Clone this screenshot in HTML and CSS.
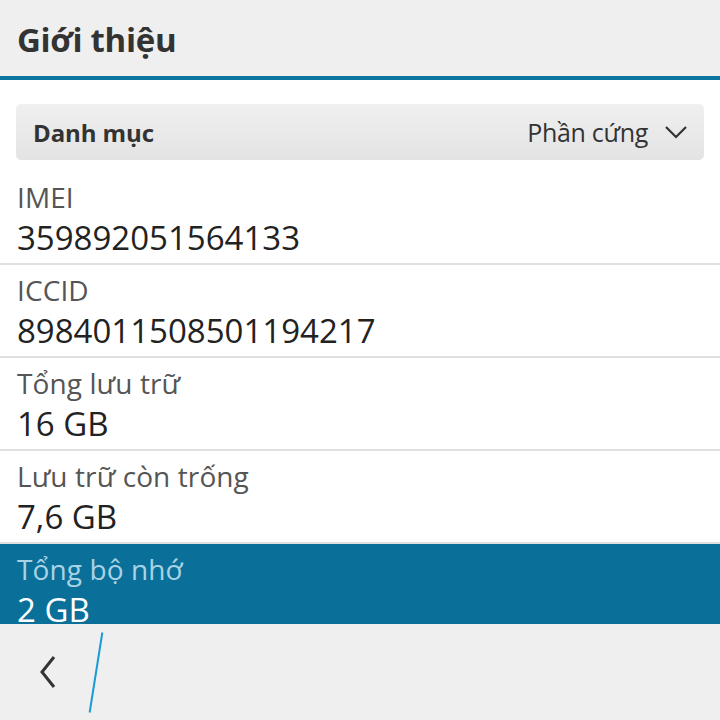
FILE: index.html
```html
<!DOCTYPE html>
<html lang="vi">
<head>
<meta charset="utf-8">
<link rel="stylesheet" href="styles.css">
</head>
<body>
<div class="screen">
  <header class="titlebar">
    <h1 class="title">Giới thiệu</h1>
  </header>
  <main class="content">
    <div class="dropdown">
      <span class="dd-label">Danh mục</span>
      <span class="dd-value">Phần cứng
        <svg class="chev" width="24" height="16" viewBox="0 0 24 16"><path d="M2 3 L12 13 L22 3" fill="none" stroke="#333" stroke-width="2.2"/></svg>
      </span>
    </div>
    <div class="list">
      <div class="item">
        <div class="label">IMEI</div>
        <div class="value">359892051564133</div>
      </div>
      <div class="item">
        <div class="label">ICCID</div>
        <div class="value">8984011508501194217</div>
      </div>
      <div class="item">
        <div class="label">Tổng lưu trữ</div>
        <div class="value">16 GB</div>
      </div>
      <div class="item">
        <div class="label">Lưu trữ còn trống</div>
        <div class="value">7,6 GB</div>
      </div>
      <div class="item selected">
        <div class="label">Tổng bộ nhớ</div>
        <div class="value">2 GB</div>
      </div>
    </div>
  </main>
  <footer class="actionbar">
    <svg class="back" width="20" height="36" viewBox="0 0 20 36"><path d="M16 3 L4 18 L16 33" fill="none" stroke="#333" stroke-width="3"/></svg>
    <span class="slash"></span>
  </footer>
</div>
</body>
</html>
```
FILE: styles.css
```css
* { box-sizing: border-box; }
html, body { margin: 0; padding: 0; }
body { font-family: "Open Sans", "DejaVu Sans", sans-serif; background: #fff; }
.screen { width: 720px; height: 720px; display: flex; flex-direction: column; overflow: hidden; }
.titlebar {
  height: 80px; flex: none; background: #efefef;
  border-bottom: 4px solid #0a76a0;
  display: flex; align-items: center; padding: 2px 17px 0;
}
.title { margin: 0; font-size: 33px; font-weight: 700; color: #333; letter-spacing: -0.3px; }
.content { flex: 1; overflow: hidden; padding-top: 24px; }
.dropdown {
  margin: 0 16px; height: 56px; border-radius: 5px;
  background: linear-gradient(#f0f0f0, #e3e3e3);
  display: flex; align-items: center; justify-content: space-between;
  padding: 0 16px 0 17px;
}
.dd-label { font-size: 24px; font-weight: 700; color: #333; letter-spacing: -0.1px; }
.dd-value { font-size: 25px; color: #333; letter-spacing: -0.3px; display: flex; align-items: center; gap: 16px; }
.chev { display: block; }
.list { margin-top: 12px; }
.item { height: 93px; border-bottom: 2px solid #e0e0e0; padding: 6px 17px 0; }
.label { font-size: 28px; line-height: 38px; color: #555; letter-spacing: 0.1px; }
.value { font-size: 33px; line-height: 44px; color: #222; }
.selected { background: #0a7099; border-bottom: none; }
.selected .label { color: #a9d3e4; }
.selected .value { color: #fff; }
.actionbar { height: 96px; flex: none; background: #efefef; position: relative; }
.back { position: absolute; left: 38px; top: 30px; }
.slash { position: absolute; left: 95px; top: 8px; width: 2px; height: 81px; background: #1a9ad6; transform: rotate(9deg); }
```
